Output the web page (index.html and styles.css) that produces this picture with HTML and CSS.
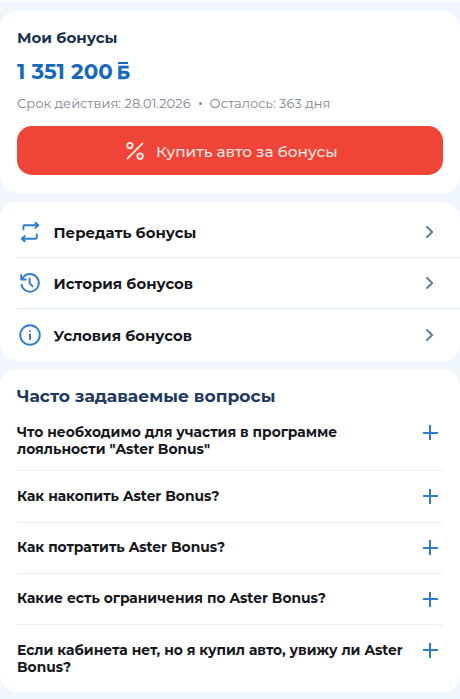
FILE: index.html
```html
<!DOCTYPE html>
<html lang="ru">
<head>
  <meta charset="UTF-8">
  <meta name="viewport" content="width=device-width, initial-scale=1.0">
  <title>Мои бонусы</title>
  <link rel="stylesheet" href="styles.css">
</head>
<body>
  <section class="card balance">
    <h2 class="balance-title">Мои бонусы</h2>
    <div class="amount"><span class="sum">1 351 200</span><span class="currency">Б</span></div>
    <div class="meta">
      <span>Срок действия: 28.01.2026</span>
      <span class="dot"></span>
      <span>Осталось: 363 дня</span>
    </div>
    <button class="buy">
      <svg width="20" height="20" viewBox="0 0 20 20" fill="none" stroke="currentColor" stroke-width="1.9" stroke-linecap="round">
        <path d="M17.4 2.6 2.6 17.4"/>
        <circle cx="4.9" cy="4.6" r="2.7"/>
        <circle cx="15.1" cy="15.2" r="2.7"/>
      </svg>
      <span>Купить авто за бонусы</span>
    </button>
  </section>

  <nav class="card menu">
    <a href="#" class="menu-row">
      <svg class="menu-icon" viewBox="0 0 26 26">
        <path d="M6.4 10.4V7.5a1.2 1.2 0 0 1 1.2-1.2h13.6M18.4 3.7l2.9 2.6-2.9 2.6M19.8 15.4v3.1a1.2 1.2 0 0 1-1.2 1.2H4.8M7.7 17.1l-2.9 2.6 2.9 2.6"/>
      </svg>
      <span class="menu-text">Передать бонусы</span>
      <svg class="chevron" viewBox="0 0 10 14"><path d="M2 2l5.2 5L2 12"/></svg>
    </a>
    <a href="#" class="menu-row">
      <svg class="menu-icon" viewBox="0 0 26 26">
        <path d="M4.4 14.6A8.8 8.8 0 1 0 5.8 7.8L4.3 9.4M4.2 4.9v4.6h4.6M12.6 8.6v4.6l2.8 3"/>
      </svg>
      <span class="menu-text">История бонусов</span>
      <svg class="chevron" viewBox="0 0 10 14"><path d="M2 2l5.2 5L2 12"/></svg>
    </a>
    <a href="#" class="menu-row">
      <svg class="menu-icon" viewBox="0 0 26 26">
        <circle cx="13" cy="13" r="9.8"/>
        <path d="M13 12.3v5M13 8.9v.2"/>
      </svg>
      <span class="menu-text">Условия бонусов</span>
      <svg class="chevron" viewBox="0 0 10 14"><path d="M2 2l5.2 5L2 12"/></svg>
    </a>
  </nav>

  <section class="card faq">
    <h2 class="faq-title">Часто задаваемые вопросы</h2>
    <div class="faq-item">
      <p>Что необходимо для участия в программе<br>лояльности "Aster Bonus"</p>
      <span class="plus"></span>
    </div>
    <div class="faq-item">
      <p>Как накопить Aster Bonus?</p>
      <span class="plus"></span>
    </div>
    <div class="faq-item">
      <p>Как потратить Aster Bonus?</p>
      <span class="plus"></span>
    </div>
    <div class="faq-item">
      <p>Какие есть ограничения по Aster Bonus?</p>
      <span class="plus"></span>
    </div>
    <div class="faq-item">
      <p>Если кабинета нет, но я купил авто, увижу ли Aster<br>Bonus?</p>
      <span class="plus"></span>
    </div>
  </section>
</body>
</html>
```
FILE: styles.css
```css
* {
  box-sizing: border-box;
}

body {
  margin: 0;
  padding-top: 10px;
  height: 699px;
  overflow: hidden;
  background: #f0f6fd;
  border-top: 1px solid #fafcfe;
  font-family: Montserrat, Inter, sans-serif;
  color: #15171c;
  display: flex;
  flex-direction: column;
}

h2,
p {
  margin: 0;
}

.card {
  background: #fff;
  border-radius: 17px;
  flex: none;
}

/* Balance */
.balance {
  height: 182px;
  padding: 17px 17px 0;
}

.balance-title {
  font-size: 15.05px;
  line-height: 20px;
  font-weight: 700;
  color: #1b2f50;
}

.amount {
  display: flex;
  align-items: center;
  height: 24px;
  margin-top: 11px;
  font-weight: 700;
  color: #1769bd;
}

.sum {
  font-size: 21.4px;
  line-height: 24px;
}

.currency {
  position: relative;
  margin-left: 4px;
  padding-top: 4px;
  font-size: 17.8px;
  line-height: 18px;
  -webkit-text-stroke: 0.4px #1769bd;
}

/* bar over the letter */
.currency::before {
  content: "";
  position: absolute;
  top: 2px;
  left: 1px;
  width: 10px;
  height: 2px;
  background: #1769bd;
}

.meta {
  display: flex;
  align-items: center;
  margin-top: 10px;
  height: 20px;
  font-size: 13.05px;
  white-space: nowrap;
  color: #7e8894;
}

.dot {
  width: 3px;
  height: 3px;
  border-radius: 50%;
  background: #7e8894;
  margin: 0 8px 0 8px;
}

.buy {
  display: flex;
  align-items: center;
  justify-content: center;
  gap: 11.5px;
  width: 100%;
  height: 49px;
  margin-top: 13.4px;
  padding: 1px 0 0 2px;
  border: none;
  border-radius: 15px;
  background: #ef4538;
  color: #ffe9e4;
  font-family: inherit;
  font-size: 15.3px;
  font-weight: 500;
}

.buy svg {
  margin-top: -1px;
}

/* Menu */
.menu {
  height: 159px;
  margin-top: 9px;
  padding: 4.6px 0 0 17px;
}

.menu-row {
  display: flex;
  align-items: center;
  height: 51.3px;
  padding-right: 25px;
  border-bottom: 1px solid #deecf7;
  color: inherit;
  text-decoration: none;
}

.menu-row:last-child {
  border-bottom: none;
}

.menu-icon {
  width: 26px;
  height: 26px;
  margin-right: 10.5px;
  fill: none;
  stroke: #2f7cc8;
  stroke-width: 1.9;
  stroke-linecap: round;
  stroke-linejoin: round;
}

.menu-text {
  flex: 1;
  padding-top: 2px;
  font-size: 14.9px;
  font-weight: 700;
}

.chevron {
  width: 10px;
  height: 14px;
  fill: none;
  stroke: #667d96;
  stroke-width: 2;
  stroke-linecap: round;
  stroke-linejoin: round;
}

/* FAQ */
.faq {
  height: 323px;
  margin-top: 8px;
  padding: 15px 17px 0;
}

.faq-title {
  font-size: 17.15px;
  line-height: 24px;
  font-weight: 700;
  color: #1f3960;
  margin-bottom: -0.4px;
}

.faq-item {
  display: flex;
  align-items: flex-start;
  justify-content: space-between;
  padding: 12px 0;
  border-bottom: 1px solid #eaf1f8;
}

.faq-item:last-child {
  border-bottom: none;
}

.faq-item p {
  padding-top: 4.5px;
  font-size: 13.87px;
  line-height: 17px;
  font-weight: 700;
  white-space: nowrap;
}

.plus {
  width: 26px;
  height: 26.4px;
  flex: none;
  background:
    linear-gradient(#2f7cc8, #2f7cc8) center / 15px 2px no-repeat,
    linear-gradient(#2f7cc8, #2f7cc8) center / 2px 15px no-repeat;
}
```
